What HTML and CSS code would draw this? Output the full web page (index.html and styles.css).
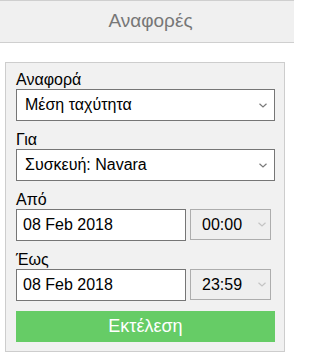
FILE: index.html
```html
<!DOCTYPE html>
<html lang="el">
<head>
<meta charset="utf-8">
<title>Αναφορές</title>
<link rel="stylesheet" href="styles.css">
</head>
<body>
<header class="topbar"><h1 class="title">Αναφορές</h1></header>
<main class="panel">
  <div class="field">
    <label class="label">Αναφορά</label>
    <div class="select">
      <span>Μέση ταχύτητα</span>
      <svg class="chev" width="8" height="5" viewBox="0 0 8 5"><path d="M0.5 0.8 L4 4 L7.5 0.8" fill="none" stroke="#7a7a7a" stroke-width="1.2"/></svg>
    </div>
  </div>
  <div class="field">
    <label class="label">Για</label>
    <div class="select">
      <span>Συσκευή: Navara</span>
      <svg class="chev" width="8" height="5" viewBox="0 0 8 5"><path d="M0.5 0.8 L4 4 L7.5 0.8" fill="none" stroke="#7a7a7a" stroke-width="1.2"/></svg>
    </div>
  </div>
  <div class="field">
    <label class="label">Από</label>
    <div class="row">
      <div class="date">08 Feb 2018</div>
      <div class="time">
        <span>00:00</span>
        <svg class="chev" width="8" height="5" viewBox="0 0 8 5"><path d="M0.5 0.8 L4 4 L7.5 0.8" fill="none" stroke="#c4c4c4" stroke-width="1.2"/></svg>
      </div>
    </div>
  </div>
  <div class="field">
    <label class="label">Έως</label>
    <div class="row">
      <div class="date">08 Feb 2018</div>
      <div class="time">
        <span>23:59</span>
        <svg class="chev" width="8" height="5" viewBox="0 0 8 5"><path d="M0.5 0.8 L4 4 L7.5 0.8" fill="none" stroke="#c4c4c4" stroke-width="1.2"/></svg>
      </div>
    </div>
  </div>
  <button class="run">Εκτέλεση</button>
</main>
</body>
</html>
```
FILE: styles.css
```css
* { box-sizing: border-box; }
html, body { margin: 0; padding: 0; background: #fff; }
body {
  font-family: "Liberation Sans", Arial, sans-serif;
  font-size: 16px;
  color: #000;
  width: 294px;
}
.topbar {
  background: #f0f0f0;
  border-top: 1px solid #cfcfcf;
  border-bottom: 1px solid #cfcfcf;
  height: 43px;
}
.title {
  margin: 0;
  font-size: 19px;
  font-weight: normal;
  color: #777;
  text-align: center;
  line-height: 40px;
  padding-left: 7px;
}
.panel {
  margin: 19px 0 0 5px;
  width: 280px;
  background: #f1f1f1;
  border: 1px solid #cdcdcd;
  padding: 8px 9px 9px 10px;
  display: flex;
  flex-direction: column;
}
.field {
  display: flex;
  flex-direction: column;
  margin-bottom: 10px;
}
.label {
  line-height: 18px;
  height: 18px;
  font-size: 16px;
}
.select {
  height: 32px;
  background: #fff;
  border: 1px solid #767676;
  display: flex;
  align-items: center;
  justify-content: space-between;
  padding: 0 7px 0 8px;
}
.row {
  display: flex;
  gap: 4px;
}
.date {
  width: 170px;
  height: 32px;
  background: #fff;
  border: 1px solid #767676;
  display: flex;
  align-items: center;
  padding-left: 6px;
}
.time {
  width: 81px;
  height: 31px;
  background: #efefef;
  border: 1px solid #adadad;
  display: flex;
  align-items: center;
  justify-content: space-between;
  padding: 0 4px 0 11px;
}
.chev { display: block; flex: none; }
.run {
  height: 31px;
  margin: 0;
  border: none;
  background: #66cc66;
  color: #fff;
  font-family: "Liberation Sans", Arial, sans-serif;
  font-size: 18px;
  padding: 0;
  width: 259px;
}
```
